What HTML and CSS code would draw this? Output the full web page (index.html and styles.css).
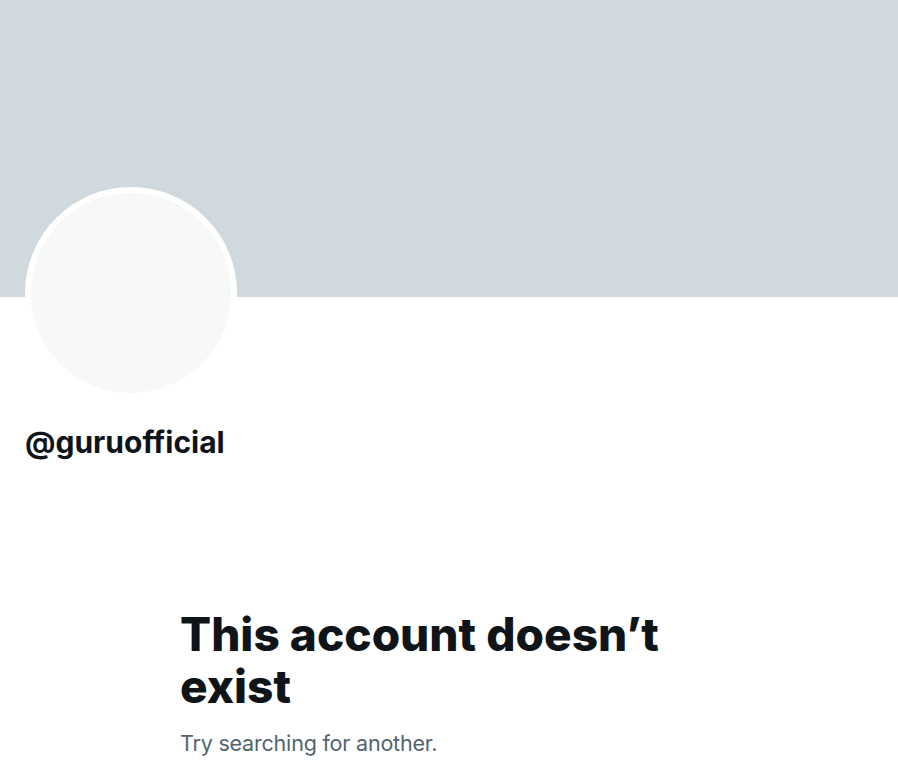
FILE: index.html
```html
<!DOCTYPE html>
<html lang="en">
<head>
<meta charset="utf-8">
<title>@guruofficial</title>
<link rel="stylesheet" href="styles.css">
</head>
<body>
<main class="profile">
  <div class="banner"></div>
  <div class="header">
    <div class="avatar"><div class="avatar-inner"></div></div>
    <div class="handle">@guruofficial</div>
  </div>
  <section class="empty">
    <h1 class="empty-title">This account doesn’t exist</h1>
    <p class="empty-sub">Try searching for another.</p>
  </section>
</main>
</body>
</html>
```
FILE: styles.css
```css
html, body {
  margin: 0;
  padding: 0;
  background: #ffffff;
}
body {
  font-family: "Inter", "Liberation Sans", sans-serif;
  color: #0f1419;
}
.profile {
  width: 898px;
}
.banner {
  height: 297px;
  background: #cfd9de;
}
.header {
  padding: 0 25px;
}
.avatar {
  width: 212px;
  height: 212px;
  margin-top: -110px;
  border-radius: 50%;
  background: #ffffff;
  padding: 6px;
  box-sizing: border-box;
}
.avatar-inner {
  width: 100%;
  height: 100%;
  border-radius: 50%;
  background: #f7f9f9;
}
.handle {
  margin-top: 25px;
  font-size: 30px;
  font-weight: 700;
  line-height: 36px;
  letter-spacing: 0;
}
.empty {
  width: 538px;
  margin: 148px auto 0;
}
.empty-title {
  margin: 0;
  font-size: 46px;
  line-height: 52px;
  font-weight: 800;
  letter-spacing: 0;
}
.empty-sub {
  margin: 16px 0 0;
  font-size: 21.5px;
  line-height: 30px;
  letter-spacing: -0.2px;
  color: #536471;
}
```
